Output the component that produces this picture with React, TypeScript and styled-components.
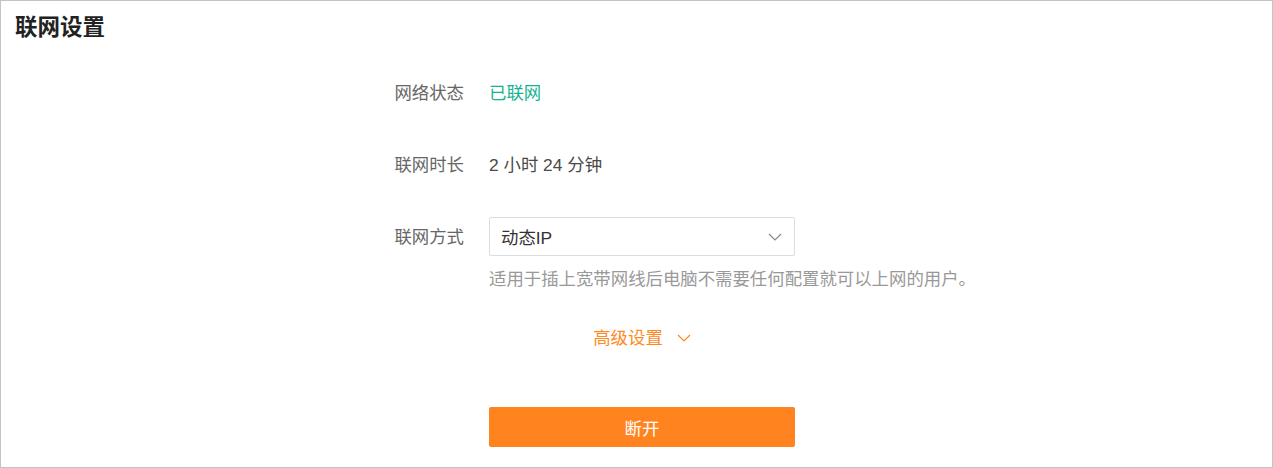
import { FC } from 'react';
import styled, { createGlobalStyle } from 'styled-components';

const GlobalStyle = createGlobalStyle`
  * { box-sizing: border-box; }
  html, body { margin: 0; padding: 0; background: #fff; }
  body {
    font-family: "Liberation Sans", "Noto Sans CJK SC", sans-serif;
    color: #333;
  }
`;

const Page = styled.div`
  width: 1273px;
  height: 468px;
  border: 1px solid #c4c4c4;
  background: #fff;
`;

const Title = styled.h1`
  margin: 0;
  padding: 12px 0 0 14px;
  height: 73px;
  font-size: 22.5px;
  line-height: 30px;
  font-weight: bold;
  color: #222;
`;

const Form = styled.div`
  display: grid;
  grid-template-columns: 463px 306px;
  column-gap: 25px;
  row-gap: 34px;
  align-items: start;
`;

const Label = styled.div`
  text-align: right;
  font-size: 17.4px;
  line-height: 38px;
  color: #666;
`;

const Value = styled.div<{ $tone?: 'ok' | 'plain' }>`
  font-size: 17.4px;
  line-height: 38px;
  color: ${p => (p.$tone === 'ok' ? '#16b393' : '#4a4a4a')};
  white-space: nowrap;
`;

const Field = styled.div`
  display: flex;
  flex-direction: column;
  margin-top: -1px;
`;

const Select = styled.div`
  display: flex;
  align-items: center;
  justify-content: space-between;
  height: 39px;
  padding: 0 12px 0 11px;
  border: 1px solid #dcdcdc;
  border-radius: 2px;
  font-size: 17.4px;
  color: #333;
`;

const Hint = styled.div`
  margin-top: 11px;
  font-size: 17.4px;
  line-height: 24px;
  color: #999;
  white-space: nowrap;
`;

const Advanced = styled.div`
  margin-top: 35px;
  display: flex;
  justify-content: center;
  align-items: center;
  gap: 14px;
  font-size: 17.4px;
  line-height: 24px;
  color: #ff8a1f;
`;

const Button = styled.button`
  margin-top: 57px;
  width: 306px;
  height: 40px;
  border: none;
  border-radius: 2px;
  background: #ff8420;
  color: #fff;
  font-family: inherit;
  font-size: 17.4px;
`;

const Chevron: FC<{ color: string }> = ({ color }) => (
  <svg width="14" height="8" viewBox="0 0 14 8" fill="none">
    <path d="M1 1l6 6 6-6" stroke={color} strokeWidth="1.2" />
  </svg>
);

const App: FC = () => (
  <>
    <GlobalStyle />
    <Page>
      <Title>联网设置</Title>
      <Form>
        <Label>网络状态</Label>
        <Value $tone="ok">已联网</Value>
        <Label>联网时长</Label>
        <Value>2 小时 24 分钟</Value>
        <Label>联网方式</Label>
        <Field>
          <Select>
            <span>动态IP</span>
            <Chevron color="#888" />
          </Select>
          <Hint>适用于插上宽带网线后电脑不需要任何配置就可以上网的用户。</Hint>
          <Advanced>
            <span>高级设置</span>
            <Chevron color="#ff8a1f" />
          </Advanced>
          <Button>断开</Button>
        </Field>
      </Form>
    </Page>
  </>
);

export default App;
